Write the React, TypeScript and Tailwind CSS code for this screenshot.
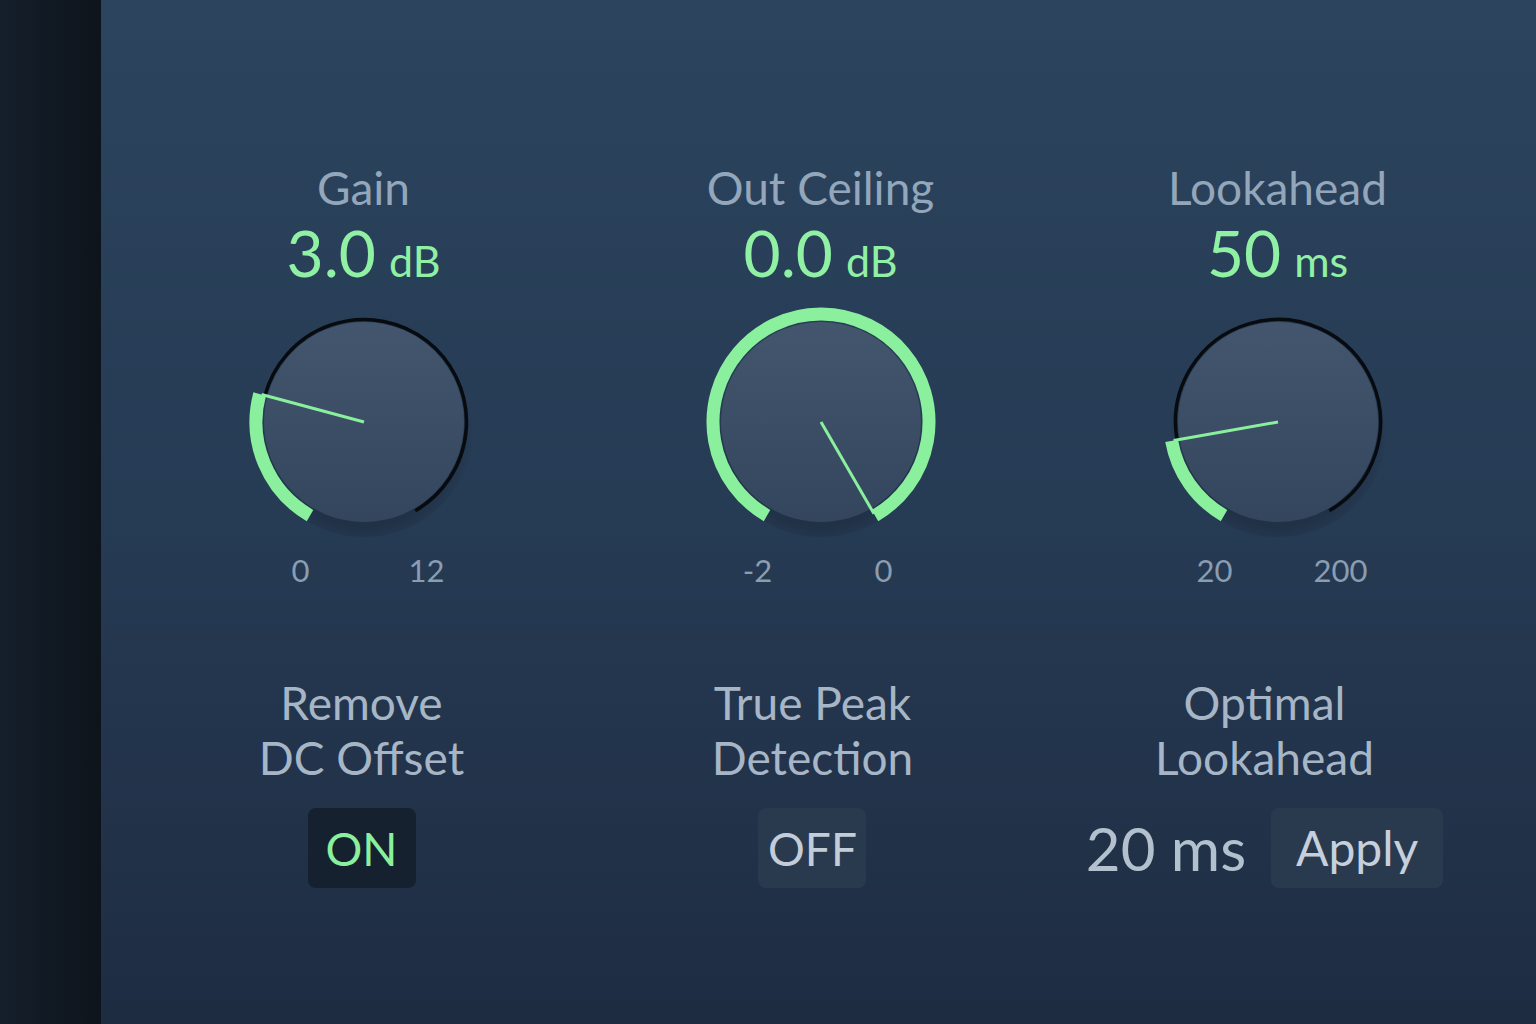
const GREEN = "#8af09e";

function polar(r: number, deg: number) {
  const a = (deg * Math.PI) / 180;
  return [120 + r * Math.sin(a), 120 - r * Math.cos(a)];
}

function arc(r: number, from: number, to: number) {
  const [x0, y0] = polar(r, from);
  const [x1, y1] = polar(r, to);
  const large = to - from > 180 ? 1 : 0;
  return `M ${x0} ${y0} A ${r} ${r} 0 ${large} 1 ${x1} ${y1}`;
}

function Knob({ angle, id }: { angle: number; id: string }) {
  const [nx, ny] = polar(106, angle);
  return (
    <svg width="240" height="240" viewBox="0 0 240 240" className="block">
      <defs>
        <linearGradient id={`fill-${id}`} x1="0" y1="0" x2="0" y2="1">
          <stop offset="0%" stopColor="#43566d" />
          <stop offset="100%" stopColor="#34465d" />
        </linearGradient>
        <radialGradient id={`shadow-${id}`} cx="0.5" cy="0.55" r="0.5">
          <stop offset="80%" stopColor="#000" stopOpacity="0.16" />
          <stop offset="100%" stopColor="#000" stopOpacity="0" />
        </radialGradient>
      </defs>
      <circle cx="120" cy="125" r="110" fill={`url(#shadow-${id})`} />
      {angle < 150 && (
        <path d={arc(102.5, angle, 150)} fill="none" stroke="#070b10" strokeWidth="3.5" />
      )}
      <circle cx="120" cy="120" r="100" fill={`url(#fill-${id})`} />
      <path d={arc(108, -150, angle)} fill="none" stroke={GREEN} strokeWidth="13" />
      <line x1="120" y1="120" x2={nx} y2={ny} stroke={GREEN} strokeWidth="3" />
    </svg>
  );
}

type Col = {
  title: string;
  value: string;
  unit: string;
  angle: number;
  min: string;
  max: string;
  labelA: string;
  labelB: string;
  shift: string;
};

const cols: Col[] = [
  { title: "Gain", value: "3.0", unit: "dB", angle: -75, min: "0", max: "12", labelA: "Remove", labelB: "DC Offset", shift: "mr-[4px]" },
  { title: "Out Ceiling", value: "0.0", unit: "dB", angle: 150, min: "-2", max: "0", labelA: "True Peak", labelB: "Detection", shift: "mr-[16px]" },
  { title: "Lookahead", value: "50", unit: "ms", angle: -100, min: "20", max: "200", labelA: "Optimal", labelB: "Lookahead", shift: "mr-[26px]" },
];

export default function App() {
  return (
    <div
      className="flex h-[1024px] w-[1536px] overflow-hidden"
      style={{ fontFamily: "Lato, 'Open Sans', sans-serif" }}
    >
      <div className="w-[101px] shrink-0 bg-gradient-to-r from-[#151f2b] to-[#0d141c]" />
      <div className="flex-1 bg-gradient-to-b from-[#2c445e] via-[#263b54] to-[#1e2c42] pl-[34px] pr-[30px]">
        <div className="grid grid-cols-3 pt-[166px]">
          {cols.map((c, i) => (
            <div key={c.title} className="flex flex-col items-center">
              <div className="text-[46px] leading-[44px] text-[#93a6ba]">{c.title}</div>
              <div className="mt-[11px] flex items-baseline gap-[13px] leading-[64px] text-[#90f1a4]">
                <span className="text-[64px]">{c.value}</span>
                <span className="text-[43px]">{c.unit}</span>
              </div>
              <div className="mt-[9px]">
                <Knob angle={c.angle} id={String(i)} />
              </div>
              <div className="mt-[12px] flex w-[190px] justify-between text-[31px] leading-[32px] text-[#8a9db1]">
                <span className="w-[64px] text-center">{c.min}</span>
                <span className="w-[64px] text-center">{c.max}</span>
              </div>
              <div className={`flex flex-col items-center ${c.shift}`}>
                <div className="mt-[89px] text-center text-[46px] leading-[55px] text-[#a7b6c6]">
                  <div>{c.labelA}</div>
                  <div>{c.labelB}</div>
                </div>
                <div className="mt-[23px] flex h-[80px] items-center gap-[25px]">
                  {i === 0 && (
                    <div className="flex h-[80px] w-[108px] items-center justify-center rounded-lg bg-[#162130] text-[46px] text-[#8af09e]">
                      ON
                    </div>
                  )}
                  {i === 1 && (
                    <div className="flex h-[80px] w-[108px] items-center justify-center rounded-lg bg-[#2a3a4e] text-[46px] text-[#c3cdd9]">
                      OFF
                    </div>
                  )}
                  {i === 2 && (
                    <>
                      <span className="text-[60px] text-[#b3c1cf]">20 ms</span>
                      <div className="flex h-[80px] w-[172px] items-center justify-center rounded-lg bg-[#2a3a4e] text-[48px] text-[#c6d0dc]">
                        Apply
                      </div>
                    </>
                  )}
                </div>
              </div>
            </div>
          ))}
        </div>
      </div>
    </div>
  );
}
